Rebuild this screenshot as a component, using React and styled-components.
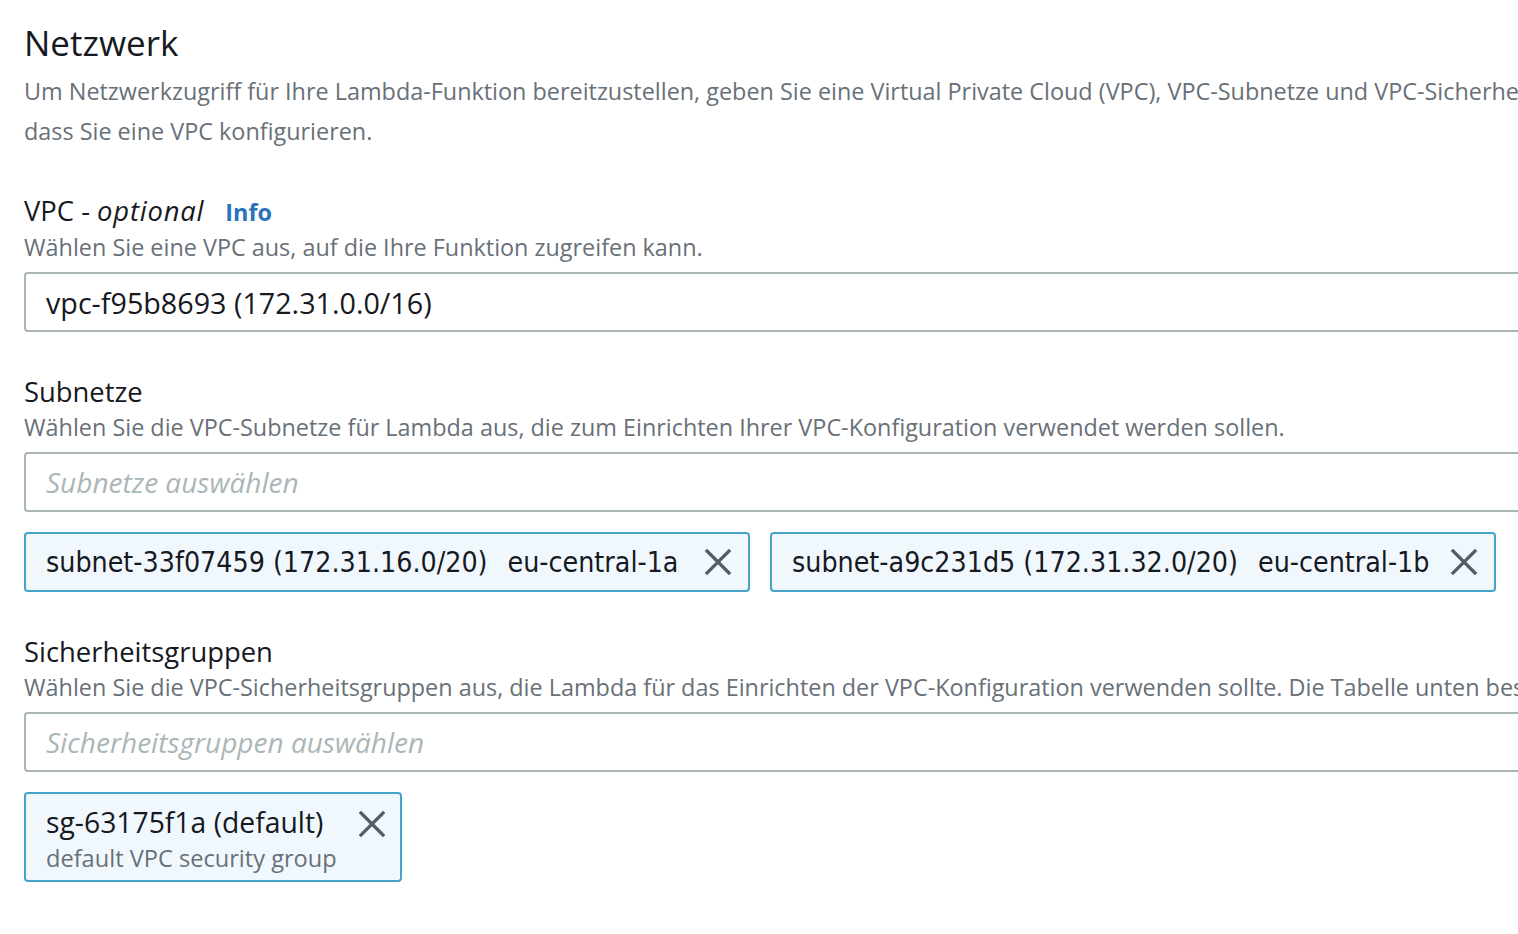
import React from "react";
import styled, { createGlobalStyle } from "styled-components";

const GlobalStyle = createGlobalStyle`
  body {
    margin: 0;
    background: #ffffff;
    overflow: hidden;
    font-family: "Open Sans", "Noto Sans", sans-serif;
  }
`;

const Page = styled.div`
  width: 1900px;
  padding: 18px 0 0 24px;
  box-sizing: border-box;
`;

const Title = styled.h2`
  margin: 0;
  font-size: 35px;
  font-weight: 400;
  line-height: 50px;
  color: #16191f;
`;

const Description = styled.p`
  margin: 3px 0 0;
  font-size: 23.4px;
  line-height: 40px;
  color: #687078;
  white-space: nowrap;
`;

const Field = styled.section`
  margin-top: ${(p) => p.$top || 42}px;
  display: flex;
  flex-direction: column;
`;

const Label = styled.div`
  display: flex;
  align-items: baseline;
  gap: 21px;
  font-size: 27.4px;
  line-height: 36px;
  color: #16191f;

  em {
    font-style: italic;
    letter-spacing: 0.8px;
  }
`;

const InfoLink = styled.a`
  font-size: 23.4px;
  font-weight: 700;
  color: #2a72bb;
  text-decoration: none;
`;

const Hint = styled.div`
  font-size: 23.4px;
  line-height: 34px;
  color: #687078;
  white-space: nowrap;
`;

const Select = styled.div`
  margin-top: 8px;
  height: 60px;
  box-sizing: border-box;
  border: 2px solid #aab7b8;
  border-radius: 4px;
  display: flex;
  align-items: center;
  padding: 0 20px;
  font-size: ${(p) => (p.$placeholder ? "28px" : "28.7px")};
  color: ${(p) => (p.$placeholder ? "#aab7b8" : "#16191f")};
  font-style: ${(p) => (p.$placeholder ? "italic" : "normal")};
`;

const Tokens = styled.div`
  margin-top: 20px;
  display: flex;
  gap: 20px;
`;

const Token = styled.div`
  box-sizing: border-box;
  width: ${(p) => p.$width}px;
  min-height: 60px;
  background: #f1f8fd;
  border: 2px solid #44a3c8;
  border-radius: 4px;
  display: flex;
  align-items: ${(p) => (p.$stacked ? "flex-start" : "center")};
  justify-content: space-between;
  padding: ${(p) => (p.$stacked ? "10px 12px 4px 20px" : "0 14px 0 20px")};
`;

const TokenText = styled.div`
  display: flex;
  flex-direction: column;
`;

const CondensedLine = styled.div`
  font-family: "DejaVu Sans", sans-serif;
  font-stretch: condensed;
  font-size: 28.3px;
  color: #16191f;
  white-space: nowrap;

  span {
    margin-left: 20px;
  }
`;

const TokenTitle = styled.div`
  font-size: 28.3px;
  line-height: 36px;
  color: #16191f;
`;

const TokenSub = styled.div`
  font-size: 23.6px;
  line-height: 36px;
  color: #687078;
`;

const Dismiss = styled.button`
  border: 0;
  background: none;
  padding: 0;
  width: 32px;
  height: 32px;
  display: flex;
  align-items: center;
  justify-content: center;
  cursor: pointer;
  margin-top: ${(p) => (p.$stacked ? "4px" : "0")};
`;

function CloseIcon() {
  return (
    <svg width="28" height="28" viewBox="0 0 28 28">
      <path d="M3 3 L25 25 M25 3 L3 25" stroke="#545b64" strokeWidth="3.2" strokeLinecap="square" fill="none" />
    </svg>
  );
}

const subnets = [
  { id: "subnet-33f07459 (172.31.16.0/20)", az: "eu-central-1a" },
  { id: "subnet-a9c231d5 (172.31.32.0/20)", az: "eu-central-1b" },
];

export default function App() {
  return (
    <Page>
      <GlobalStyle />
      <Title>Netzwerk</Title>
      <Description>
        Um Netzwerkzugriff für Ihre Lambda-Funktion bereitzustellen, geben Sie eine Virtual Private Cloud (VPC), VPC-Subnetze und VPC-Sicherheitsgruppen an. Es ist nicht erforderlich,
        <br />
        dass Sie eine VPC konfigurieren.
      </Description>

      <Field $top={42}>
        <Label>
          <span>
            VPC - <em>optional</em>
          </span>
          <InfoLink href="#">Info</InfoLink>
        </Label>
        <Hint>Wählen Sie eine VPC aus, auf die Ihre Funktion zugreifen kann.</Hint>
        <Select>vpc-f95b8693 (172.31.0.0/16)</Select>
      </Field>

      <Field $top={42}>
        <Label>Subnetze</Label>
        <Hint>Wählen Sie die VPC-Subnetze für Lambda aus, die zum Einrichten Ihrer VPC-Konfiguration verwendet werden sollen.</Hint>
        <Select $placeholder>Subnetze auswählen</Select>
        <Tokens>
          {subnets.map((s) => (
            <Token key={s.id} $width={726}>
              <CondensedLine>
                {s.id}
                <span>{s.az}</span>
              </CondensedLine>
              <Dismiss>
                <CloseIcon />
              </Dismiss>
            </Token>
          ))}
        </Tokens>
      </Field>

      <Field $top={42}>
        <Label>Sicherheitsgruppen</Label>
        <Hint>Wählen Sie die VPC-Sicherheitsgruppen aus, die Lambda für das Einrichten der VPC-Konfiguration verwenden sollte. Die Tabelle unten beschreibt die Regeln.</Hint>
        <Select $placeholder>Sicherheitsgruppen auswählen</Select>
        <Tokens>
          <Token $width={378} $stacked>
            <TokenText>
              <TokenTitle>sg-63175f1a (default)</TokenTitle>
              <TokenSub>default VPC security group</TokenSub>
            </TokenText>
            <Dismiss $stacked>
              <CloseIcon />
            </Dismiss>
          </Token>
        </Tokens>
      </Field>
    </Page>
  );
}
